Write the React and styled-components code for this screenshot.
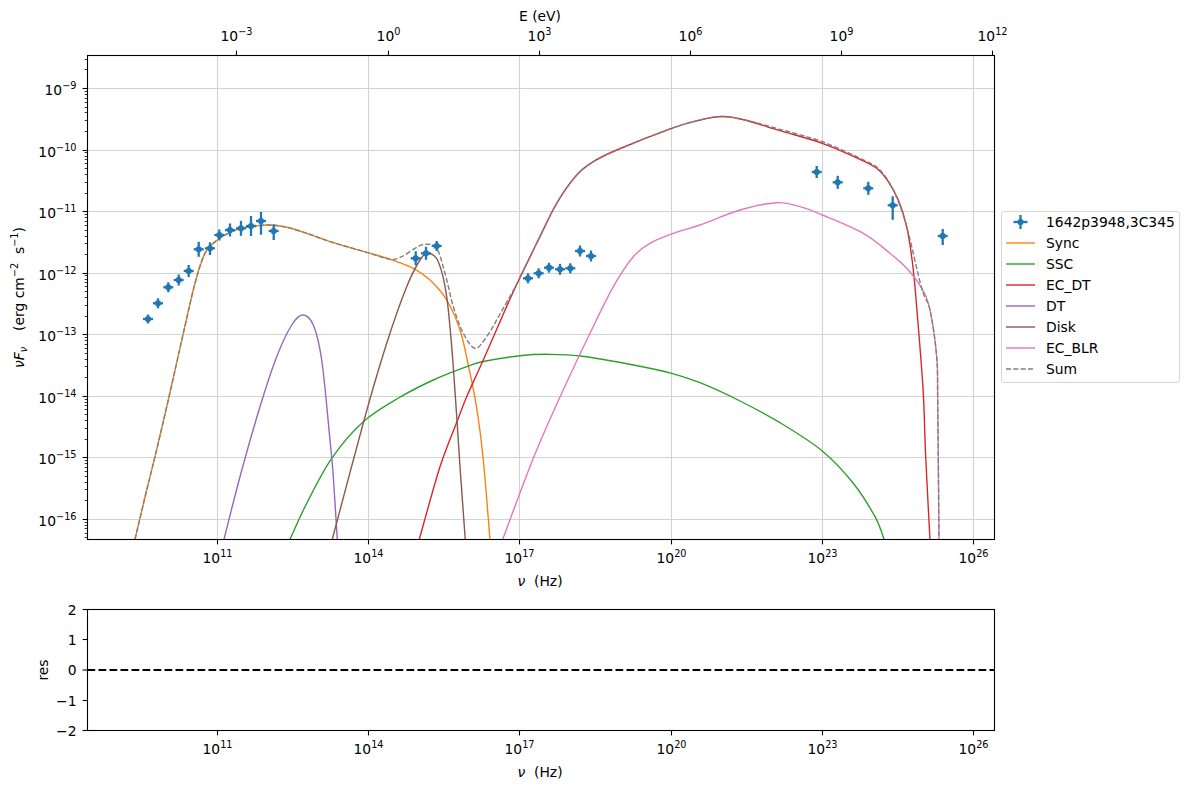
import React from 'react';
import styled, { createGlobalStyle } from 'styled-components';

const GlobalStyle = createGlobalStyle`
  html, body {
    margin: 0;
    padding: 0;
    background: #fff;
  }
  body {
    font-family: "DejaVu Sans", "Liberation Sans", sans-serif;
    font-size: 13.89px;
    color: #000;
  }
`;

const Page = styled.div`
  width: 1189px;
  height: 790px;
  display: flex;
  align-items: flex-start;
  overflow: hidden;
`;

const Charts = styled.div`
  width: 1001px;
  flex: none;
  display: flex;
  flex-direction: column;
`;

const Chart = styled.svg`
  display: block;
  overflow: visible;
`;

const Label = styled.text`
  font-family: "DejaVu Sans", sans-serif;
  font-size: 13.89px;
  fill: #000;
  white-space: pre;
  text-anchor: ${(p) => p.$anchor || 'middle'};
`;

const Italic = styled.tspan`
  font-style: italic;
`;

const Legend = styled.div`
  width: 179px;
  box-sizing: border-box;
  margin-top: 211px;
  padding: 0 4px 3px;
  border: 1px solid #d6d6d6;
  border-radius: 3px;
  flex: none;
`;

const LegendRow = styled.div`
  height: 20.9px;
  display: flex;
  align-items: center;
  gap: 11px;
  white-space: nowrap;
`;

const Swatch = styled.svg`
  display: block;
  flex: none;
`;

const colors = {
  blue: '#1f77b4',
  sync: '#ff7f0e',
  ssc: '#2ca02c',
  ecdt: '#d62728',
  dt: '#9467bd',
  disk: '#8c564b',
  blr: '#e377c2',
  sum: '#7f7f7f',
};

const LEFT = 87.5;
const RIGHT = 994.5;
const TOP = 55.5;
const BOTTOM = 539.5;
const RES_TOP = 0.5;
const RES_BOTTOM = 121.5;

const xTicks = [
  [217.5, '11'],
  [368.5, '14'],
  [519.5, '17'],
  [671.5, '20'],
  [822.5, '23'],
  [973.5, '26'],
];
const topTicks = [
  [236.5, '−3'],
  [388.5, '0'],
  [539.5, '3'],
  [690.5, '6'],
  [841.5, '9'],
  [992.5, '12'],
];
const yTicks = [-9, -10, -11, -12, -13, -14, -15, -16];
const yExact = (d) => 88.5 + 61.55 * (-9 - d);
// lines are snapped to whole pixels
const yPos = (d) => Math.floor(yExact(d)) + 0.5;

const minorTicks = [];
for (let d = -17; d <= -9; d++) {
  for (let m = 2; m <= 9; m++) {
    const y = Math.floor(yExact(d) - 61.55 * Math.log10(m)) + 0.5;
    if (y > TOP && y < BOTTOM) minorTicks.push(y);
  }
}

const sync = [
  [135, 539.3], [145, 497], [155, 456.7], [168.3, 400], [183.3, 333.3], [195, 283.3], [205, 253.3],
  [217.3, 240], [231.7, 231.7], [246.7, 227.3], [268.3, 225], [286.7, 227.3], [306.7, 233.3],
  [333.3, 242.7], [366.7, 252.3], [390, 259.3],
];
const syncEnd = [
  [413.3, 268.3], [430, 280], [446.7, 300], [460, 330], [468.3, 365], [476.7, 408], [483.3, 460], [490, 540],
];
const ssc = [
  [290, 539.3], [306.7, 503.3], [331.7, 458.3], [363.3, 421.7], [400, 397.2], [433.3, 380], [466.7, 366.7],
  [483.3, 361.5], [520, 355.7], [546.7, 354.3], [580, 356], [633.3, 365], [671.7, 373.3], [700, 382.7],
  [740, 401], [780, 422.7], [822.3, 451], [853.3, 483.3], [875, 516.7], [884.3, 540],
];
const ecdtRise = [
  [419.3, 539.3], [440, 466.7], [458.3, 418.3], [466.7, 396.7], [483.3, 360], [513.3, 291.7],
];
const ecdtTop = [
  [536.7, 243.3], [556.7, 203.3], [576.7, 175], [593.3, 161.7], [616.7, 150], [671.7, 128.3],
  [700, 120], [722, 116.5], [745, 120],
];
const ecdtFall = [
  [780, 130.7], [822.3, 143.3], [860, 159.3], [876.7, 168.3], [888.3, 181.7], [898.3, 200],
  [906.7, 226.7], [913.3, 270], [918.3, 326.7], [923.3, 393.3], [925.7, 456.7], [930, 540],
];
const dt = [
  [224, 539.3], [240, 476.7], [260, 406.7], [276.7, 356.7], [291.7, 325], [302.7, 315], [313.3, 325],
  [321.7, 360], [330, 440], [333.3, 476.7], [337.3, 540],
];
const disk = [
  [332.3, 539.3], [365, 416.7], [386.7, 343.3], [406.7, 286.7], [420, 260], [428.3, 253.3], [438.3, 261.7],
  [446.7, 296.7], [453.3, 366.7], [460, 466.7], [465.3, 540],
];
const blrTail = [
  [921.7, 288.3], [930, 310], [936.7, 356.7], [937.7, 400], [939, 540],
];
const blr = [
  [502.7, 539.3], [533.3, 458.3], [560, 397], [590, 333.3], [613.3, 286.7], [633.3, 256.7], [650, 243.3],
  [673.3, 233.3], [700, 225], [740, 210], [776, 202.7], [800, 206.7], [822.3, 215], [863.3, 233.3],
  [890, 253.3], [906.7, 268.3], ...blrTail,
];
const sum = [
  ...sync, [401.7, 256.7], [415, 248.3], [425, 244.3], [436.7, 248.3], [445, 273.3], [453.3, 306.7],
  [463.3, 333.3], [475, 348.3], [486.7, 336.7], [500, 314], [516.7, 284], ...ecdtTop,
  [780, 129.3], [822.3, 141.7], [865, 160.7], [880, 170], [893.3, 190], [906.7, 226.7], ...blrTail,
];

const curves = [
  [[...sync, ...syncEnd], colors.sync],
  [ssc, colors.ssc],
  [[...ecdtRise, ...ecdtTop, ...ecdtFall], colors.ecdt],
  [dt, colors.dt],
  [disk, colors.disk],
  [blr, colors.blr],
];

// x, y, half width of the error bar, error up, error down
const points = [
  [148, 319, 5, 4.5, 4.5], [158, 303.3, 5, 5, 5], [168.3, 287.3, 5, 5, 5], [178.7, 280, 5, 5.5, 5.5],
  [188.7, 271, 5, 6, 6], [198.7, 249.3, 5, 7.5, 7.5], [210, 248.3, 5, 6, 6.7], [219.3, 235, 5, 5.5, 5.5],
  [230, 230, 5, 6.5, 6.5], [241, 228.3, 5, 7.5, 7.5], [251, 226, 5, 10, 10], [261, 221, 5, 9, 13.7],
  [273.7, 231, 5, 6.7, 9], [415.7, 258.3, 5, 7, 7], [426, 253.3, 5, 6.5, 6.5], [436.7, 246, 5, 5, 5],
  [528, 278.3, 5, 5, 5], [538.7, 273.3, 5, 5, 5], [549, 267.7, 5, 5, 5], [560, 269.3, 5, 5.5, 5.5],
  [570.3, 268.3, 5, 5, 5], [580, 251, 5, 5.5, 5.5], [591, 256, 5, 5.5, 5.5], [816.7, 172, 5, 6, 6],
  [837.7, 182.3, 5, 6.5, 6.5], [868.3, 188.3, 5, 6.5, 6.5], [892.7, 205.3, 5, 9, 14.5], [942.7, 236, 5, 7, 9],
];

// catmull-rom through the traced points
const smooth = (pts) => {
  let d = `M${pts[0][0]} ${pts[0][1]}`;
  for (let i = 0; i < pts.length - 1; i++) {
    const p0 = pts[i - 1] || pts[i];
    const p1 = pts[i];
    const p2 = pts[i + 1];
    const p3 = pts[i + 2] || p2;
    const c1x = p1[0] + (p2[0] - p0[0]) / 6;
    const c1y = p1[1] + (p2[1] - p0[1]) / 6;
    const c2x = p2[0] - (p3[0] - p1[0]) / 6;
    const c2y = p2[1] - (p3[1] - p1[1]) / 6;
    d += `C${c1x.toFixed(1)} ${c1y.toFixed(1)} ${c2x.toFixed(1)} ${c2y.toFixed(1)} ${p2[0]} ${p2[1]}`;
  }
  return d;
};

const Power = ({ x, y, exp, anchor }) => (
  <Label x={x} y={y} $anchor={anchor}>
    10<tspan dy="-5.6" fontSize="9.72">{exp}</tspan>
  </Label>
);

const Frame = ({ top, bottom }) => (
  <rect x={LEFT} y={top} width={RIGHT - LEFT} height={bottom - top} fill="none" stroke="#000" strokeWidth="1.1" />
);

const Marker = ({ x, y, w, up, down }) => (
  <g stroke={colors.blue} strokeWidth="2.3">
    <line x1={x - w} y1={y} x2={x + w} y2={y} />
    <line x1={x} y1={y - up} x2={x} y2={y + down} />
    <circle cx={x} cy={y} r="3.1" fill={colors.blue} stroke="none" />
  </g>
);

const MainChart = () => (
  <Chart width="1001" height="609" viewBox="0 0 1001 609">
    <defs>
      <clipPath id="axes">
        <rect x={LEFT} y={TOP} width={RIGHT - LEFT} height={BOTTOM - TOP} />
      </clipPath>
    </defs>

    <g stroke="#d2d2d2" strokeWidth="1.1">
      {xTicks.map(([x]) => <line key={x} x1={x} y1={TOP} x2={x} y2={BOTTOM} />)}
      {yTicks.map((d) => <line key={d} x1={LEFT} y1={yPos(d)} x2={RIGHT} y2={yPos(d)} />)}
    </g>

    <g clipPath="url(#axes)" fill="none" strokeWidth="1.39">
      {curves.map(([pts, color]) => <path key={color} d={smooth(pts)} stroke={color} />)}
      <path d={smooth(sum)} stroke={colors.sum} strokeDasharray="5.1 2.2" />
    </g>
    {points.map(([x, y, w, up, down]) => <Marker key={x} x={x} y={y} w={w} up={up} down={down} />)}

    <Frame top={TOP} bottom={BOTTOM} />
    <g stroke="#000" strokeWidth="1.1">
      {xTicks.map(([x]) => <line key={x} x1={x} y1={BOTTOM} x2={x} y2={BOTTOM + 4.9} />)}
      {topTicks.map(([x]) => <line key={x} x1={x} y1={TOP} x2={x} y2={TOP - 4.9} />)}
      {yTicks.map((d) => <line key={d} x1={LEFT} y1={yPos(d)} x2={LEFT - 4.9} y2={yPos(d)} />)}
    </g>
    <g stroke="#000" strokeWidth="0.8">
      {minorTicks.map((y) => <line key={y} x1={LEFT} y1={y} x2={LEFT - 2.8} y2={y} />)}
    </g>

    {xTicks.map(([x, exp]) => <Power key={x} x={x} y={563} exp={exp} />)}
    {topTicks.map(([x, exp]) => <Power key={x} x={x} y={41} exp={exp} />)}
    {yTicks.map((d) => <Power key={d} x={76.5} y={yPos(d) + 6} exp={`−${-d}`} anchor="end" />)}

    <Label x={540} y={21}>E (eV)</Label>
    <Label x={540} y={586}><Italic>ν</Italic>{'  (Hz)'}</Label>
    <Label x={24} y={297.5} transform="rotate(-90 24 297.5)">
      <Italic>νF</Italic><tspan dy="3" fontSize="9.72"><Italic>ν</Italic></tspan>
      <tspan dy="-3" dx="7">{'  (erg cm'}</tspan><tspan dy="-5.6" fontSize="9.72">−2</tspan>
      <tspan dy="5.6">{'  s'}</tspan><tspan dy="-5.6" fontSize="9.72">−1</tspan>
      <tspan dy="5.6">)</tspan>
    </Label>
  </Chart>
);

const resTicks = [
  [2, RES_TOP],
  [1, 30.5],
  [0, 61],
  ['−1', 91.5],
  ['−2', RES_BOTTOM],
];

const ResidualChart = () => (
  <Chart width="1001" height="181" viewBox="0 0 1001 181">
    <line x1={LEFT} y1="61" x2={RIGHT} y2="61" stroke="#000" strokeWidth="2.08" strokeDasharray="7.7 3.3" />
    <Frame top={RES_TOP} bottom={RES_BOTTOM} />
    <g stroke="#000" strokeWidth="1.1">
      {xTicks.map(([x]) => <line key={x} x1={x} y1={RES_BOTTOM} x2={x} y2={RES_BOTTOM + 4.9} />)}
      {resTicks.map(([, y]) => <line key={y} x1={LEFT} y1={y} x2={LEFT - 4.9} y2={y} />)}
    </g>
    {resTicks.map(([label, y]) => <Label key={y} x={76.5} y={y + 5} $anchor="end">{label}</Label>)}
    {xTicks.map(([x, exp]) => <Power key={x} x={x} y={145} exp={exp} />)}
    <Label x={540} y={168}><Italic>ν</Italic>{'  (Hz)'}</Label>
    <Label x={48} y={61} transform="rotate(-90 48 61)">res</Label>
  </Chart>
);

const legendLines = [
  ['Sync', colors.sync],
  ['SSC', colors.ssc],
  ['EC_DT', colors.ecdt],
  ['DT', colors.dt],
  ['Disk', colors.disk],
  ['EC_BLR', colors.blr],
  ['Sum', colors.sum, '5.1 2.2'],
];

const App = () => (
  <Page>
    <GlobalStyle />
    <Charts>
      <MainChart />
      <ResidualChart />
    </Charts>
    <Legend>
      <LegendRow>
        <Swatch width="29" height="16" viewBox="0 0 29 16">
          <Marker x={14.5} y={8} w={7} up={7} down={7} />
        </Swatch>
        1642p3948,3C345
      </LegendRow>
      {legendLines.map(([name, color, dash]) => (
        <LegendRow key={name}>
          <Swatch width="29" height="16" viewBox="0 0 29 16">
            <line x1="0" y1="8" x2="29" y2="8" stroke={color} strokeWidth="1.39" strokeDasharray={dash} />
          </Swatch>
          {name}
        </LegendRow>
      ))}
    </Legend>
  </Page>
);

export default App;
